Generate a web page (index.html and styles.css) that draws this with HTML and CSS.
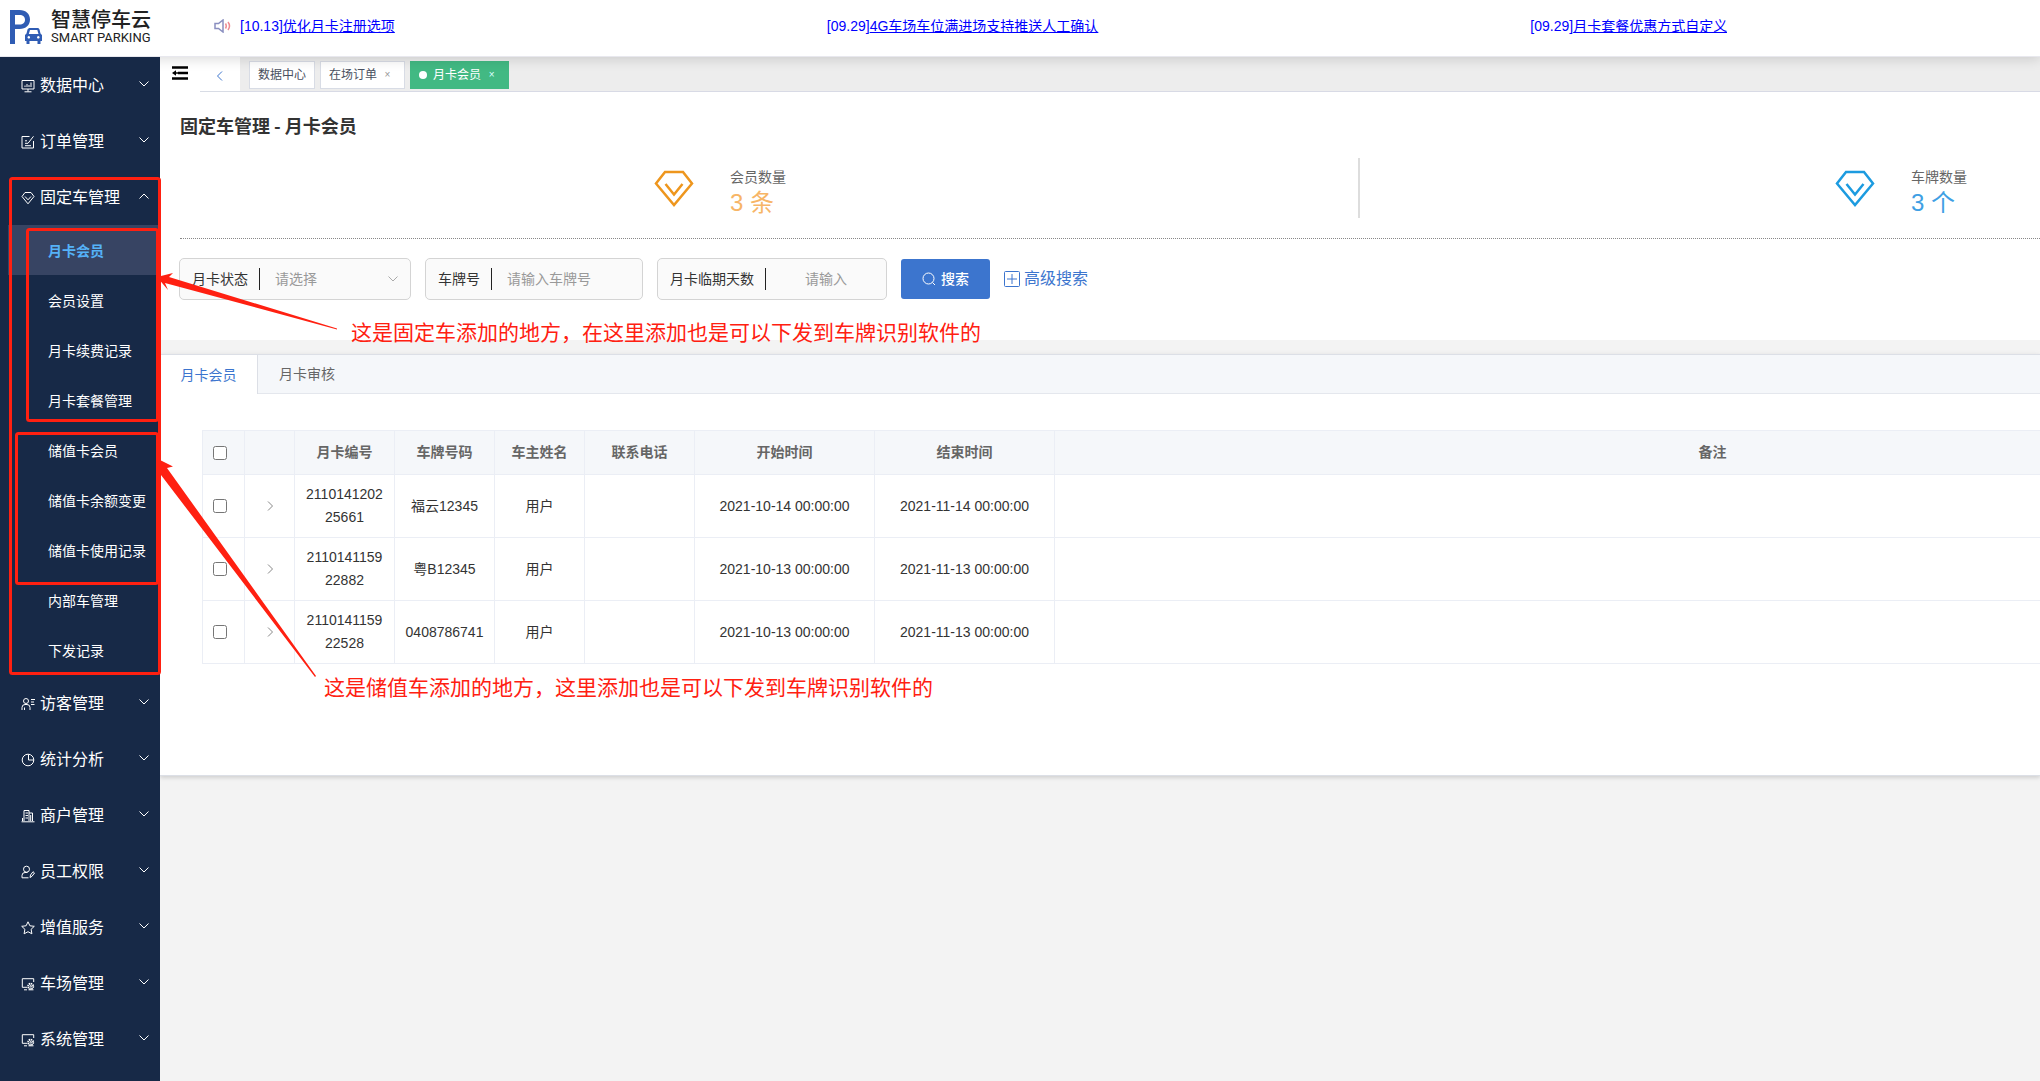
FILE: index.html
```html
<!DOCTYPE html>
<html lang="zh-CN">
<head>
<meta charset="utf-8">
<title>智慧停车云</title>
<link rel="stylesheet" href="styles.css">
</head>
<body>
<svg class="defs" aria-hidden="true">
  <symbol id="down" viewBox="0 0 12 12"><path d="M1.500 3.500L6 8l4.500-4.500"/></symbol>
  <symbol id="right" viewBox="0 0 12 12"><path d="M4 1.500L8.500 6 4 10.500"/></symbol>
  <symbol id="gem" viewBox="0 0 40 40"><path d="M11 3h18l9 11.500L20 36 2 14.500z"/><path d="M11.500 15L20 25.500 28.500 15"/></symbol>
  <symbol id="monitor-gear" viewBox="0 0 14 14"><path d="M6 10.300H1.300V1.700h11.400V5M3 12.800h3"/><circle cx="9.700" cy="9.300" r="2.600" stroke-dasharray="1.400 .6" stroke-width="1.800"/><circle cx="9.700" cy="9.300" r=".8"/><path d="M7.500 12.800h5"/></symbol>
</svg>

<header class="header">
  <div class="logo">
    <svg class="logo-mark" viewBox="0 0 32 34" aria-hidden="true">
      <path fill="#2f5cb4" fill-rule="evenodd" d="M0 0h9.500c6.500 0 10.500 4 10.500 9.500S16 19 9.500 19H5v15H0zM5 5v9.500h4.500c3.500 0 5.500-2 5.500-4.800S13 5 9.500 5z"/>
      <path fill="#2f5cb4" fill-rule="evenodd" d="M20 18h7.500c1 0 1.700.6 2 1.500l1 4 1.500 1.500v6h-1.500v3h-3v-3h-8v3h-3v-3H15v-6l1.500-1.500 1-4c.3-.9 1.500-1.500 2.500-1.500zm0 2-1.200 4h9.700l-1.200-4zM18.800 26a1.300 1.300 0 1 0 .01 0zm9.500 0a1.300 1.300 0 1 0 .01 0z"/>
    </svg>
    <div class="logo-text"><strong>智慧停车云</strong><span>SMART PARKING</span></div>
  </div>
  <div class="news">
    <svg class="speaker" viewBox="0 0 17 14" aria-hidden="true"><path d="M1 4.500h3.500L9 1v12L4.500 9.500H1z" stroke="#8a8fc0" stroke-width="1.500"/><path d="M11.500 4.500q1.500 2.500 0 5M14 3q3 4 0 8" stroke="#ee8a92" stroke-width="1.500"/></svg>
    <div class="news-list">
      <a href="#">[10.13]<u>优化月卡注册选项</u></a>
      <a href="#">[09.29]<u>4G车场车位满进场支持推送人工确认</u></a>
      <a href="#">[09.29]<u>月卡套餐优惠方式自定义</u></a>
    </div>
  </div>
</header>

<div class="layout">
  <nav class="sidebar">
    <a class="menu" href="#"><svg viewBox="0 0 14 14"><path d="M1 1.500h12v8.500H1zM3.500 12.800h7M7 10v2.500M4 8V6.500M6 8V5M8 8V6M10 8V3.500"/></svg><span>数据中心</span><svg class="arrow"><use href="#down"/></svg></a>
    <a class="menu" href="#"><svg viewBox="0 0 14 14"><path d="M8.500 1.500H1v11.500h11.500V6M4 10.700h6M4 8.300h3l5.500-7M4 5.800h2"/></svg><span>订单管理</span><svg class="arrow"><use href="#down"/></svg></a>
    <a class="menu" href="#"><svg viewBox="0 0 14 14"><path d="M4 1.500h6l3 4L7 12.800 1 5.500z"/><path d="M4 5.500l3 3.300 3-3.300"/></svg><span>固定车管理</span><svg class="arrow up"><use href="#down"/></svg></a>
    <div class="submenu">
      <a class="active" href="#">月卡会员</a>
      <a href="#">会员设置</a>
      <a href="#">月卡续费记录</a>
      <a href="#">月卡套餐管理</a>
      <a href="#">储值卡会员</a>
      <a href="#">储值卡余额变更</a>
      <a href="#">储值卡使用记录</a>
      <a href="#">内部车管理</a>
      <a href="#">下发记录</a>
    </div>
    <a class="menu" href="#"><svg viewBox="0 0 14 14"><circle cx="5" cy="4" r="2.500"/><path d="M1 13v-2.500q0-3 3-3h2q3 0 3 3V13M3.500 13v-2.500M10 2.500h4M10 5h3M10 7.500h3.500"/></svg><span>访客管理</span><svg class="arrow"><use href="#down"/></svg></a>
    <a class="menu" href="#"><svg viewBox="0 0 14 14"><circle cx="7" cy="7" r="5.800"/><path d="M7.500 1.500v5.500h5.500"/></svg><span>统计分析</span><svg class="arrow"><use href="#down"/></svg></a>
    <a class="menu" href="#"><svg viewBox="0 0 14 14"><path d="M3 12V1.500h5V12M8 4h3.500v8M.5 12.800h13M1.500 12V9M4.500 4H7M4.500 6.500H7M4.500 9H7M9.700 6v6"/></svg><span>商户管理</span><svg class="arrow"><use href="#down"/></svg></a>
    <a class="menu" href="#"><svg viewBox="0 0 14 14"><circle cx="5.500" cy="4.200" r="3"/><path d="M7.500 12.800H1v-2.300q0-3 3-3h2.500M9 12.500l.5-2.500 2.500-3.300 1.500 1.300-2.500 3.300z"/></svg><span>员工权限</span><svg class="arrow"><use href="#down"/></svg></a>
    <a class="menu" href="#"><svg viewBox="0 0 14 14"><path d="M7 .8l1.900 4 4.400.5-3.200 3 .8 4.500L7 10.700l-3.900 2.100.8-4.500-3.200-3 4.400-.5z"/></svg><span>增值服务</span><svg class="arrow"><use href="#down"/></svg></a>
    <a class="menu" href="#"><svg><use href="#monitor-gear"/></svg><span>车场管理</span><svg class="arrow"><use href="#down"/></svg></a>
    <a class="menu" href="#"><svg><use href="#monitor-gear"/></svg><span>系统管理</span><svg class="arrow"><use href="#down"/></svg></a>
  </nav>

  <main class="main">
    <div class="tagbar">
      <button class="fold" aria-label="收起菜单"><svg viewBox="0 0 16 14"><path d="M0 1.500h16M6 7h10M0 12.500h16" stroke-width="2.500"/><path d="M0 7l4-2.800v5.600z" fill="#000" stroke="none"/><path d="M3 7h3" stroke-width="1.500"/></svg></button>
      <button class="back" aria-label="后退"><svg><use href="#right"/></svg></button>
      <div class="tags">
        <a class="tag" href="#">数据中心</a>
        <a class="tag" href="#">在场订单<i>×</i></a>
        <a class="tag current" href="#"><b></b>月卡会员<i>×</i></a>
      </div>
    </div>

    <section class="top">
      <h1>固定车管理 - 月卡会员</h1>
      <div class="stats">
        <div class="stat members"><svg><use href="#gem"/></svg><div><p>会员数量</p><strong>3 条</strong></div></div>
        <div class="stat plates"><svg><use href="#gem"/></svg><div><p>车牌数量</p><strong>3 个</strong></div></div>
      </div>
      <form class="filters">
        <div class="field status">
          <label for="status">月卡状态</label>
          <select id="status"><option>请选择</option></select>
          <svg><use href="#down"/></svg>
        </div>
        <div class="field plate"><label for="plate">车牌号</label><input id="plate" type="text" placeholder="请输入车牌号"></div>
        <div class="field days"><label for="days">月卡临期天数</label><input id="days" type="text" placeholder="请输入"></div>
        <button class="search" type="button"><svg viewBox="0 0 14 14"><circle cx="6.500" cy="6.500" r="5.500"/><path d="M10.500 10.500l2.500 2.500"/></svg>搜索</button>
        <a class="advanced" href="#"><svg viewBox="0 0 16 16"><rect x=".5" y=".5" width="15" height="15" rx="1"/><path d="M3 8h10M8 3v10"/></svg>高级搜索</a>
      </form>
    </section>

    <section class="panel">
      <div class="tabs"><button class="on">月卡会员</button><button>月卡审核</button></div>
      <div class="table-wrap">
        <table>
          <colgroup><col class="c-check"><col class="c-open"><col class="c-id"><col class="c-id"><col class="c-name"><col class="c-phone"><col class="c-time"><col class="c-time"><col></colgroup>
          <thead>
            <tr><th><input type="checkbox" aria-label="全选"></th><th></th><th>月卡编号</th><th>车牌号码</th><th>车主姓名</th><th>联系电话</th><th>开始时间</th><th>结束时间</th><th>备注</th></tr>
          </thead>
          <tbody>
            <tr><td><input type="checkbox" aria-label="选择"></td><td><svg><use href="#right"/></svg></td><td>211014120225661</td><td>福云12345</td><td>用户</td><td></td><td>2021-10-14 00:00:00</td><td>2021-11-14 00:00:00</td><td></td></tr>
            <tr><td><input type="checkbox" aria-label="选择"></td><td><svg><use href="#right"/></svg></td><td>211014115922882</td><td>粤B12345</td><td>用户</td><td></td><td>2021-10-13 00:00:00</td><td>2021-11-13 00:00:00</td><td></td></tr>
            <tr><td><input type="checkbox" aria-label="选择"></td><td><svg><use href="#right"/></svg></td><td>211014115922528</td><td>0408786741</td><td>用户</td><td></td><td>2021-10-13 00:00:00</td><td>2021-11-13 00:00:00</td><td></td></tr>
          </tbody>
        </table>
      </div>
    </section>
  </main>
</div>

<svg class="marks" viewBox="0 0 360 700" aria-hidden="true">
  <g fill="none" stroke="#ff2011" stroke-width="3">
    <rect x="10.500" y="178.500" width="149" height="495" rx="2"/>
    <rect x="27.500" y="229.500" width="130" height="191" rx="2"/>
    <rect x="16.500" y="433.500" width="141" height="150" rx="2"/>
  </g>
  <path fill="#ff2011" d="M157 277L173 273l-4 4L337 328.500v1L165 283l3 7z"/>
  <path fill="#ff2011" d="M158 459L173 466.500l-6 1.500L316 676l-1 1L161 475l-3 6z"/>
</svg>
<p class="note note-monthly">这是固定车添加的地方，在这里添加也是可以下发到车牌识别软件的</p>
<p class="note note-stored">这是储值车添加的地方，这里添加也是可以下发到车牌识别软件的</p>
</body>
</html>
```
FILE: styles.css
```css
* { box-sizing: border-box; }
body {
  margin: 0;
  position: relative;
  min-height: 100vh;
  overflow-x: hidden;
  background: #f3f3f3;
  color: #333;
  font: 14px/20px "Liberation Sans", "Noto Sans CJK SC", sans-serif;
}
svg { fill: none; stroke: currentColor; display: block; flex: none; }
.defs { display: none; }
a { color: inherit; text-decoration: none; }
p, h1 { margin: 0; }
button, input, select { font: inherit; color: inherit; }
button { border: 0; padding: 0; background: none; }

/* header */
.header {
  position: relative;
  z-index: 1;
  display: flex;
  align-items: center;
  height: 57px;
  background: #fff;
  border-bottom: 1px solid #e8e8ee;
  box-shadow: 0 2px 12px rgba(0, 0, 0, .15);
}
.logo { display: flex; align-items: center; gap: 9px; width: 214px; padding: 0 0 2px 10px; flex: none; }
.logo-mark { width: 32px; height: 34px; stroke: none; }
.logo-text { display: flex; flex-direction: column; color: #222; }
.logo-text strong { font: 500 20px/22px "Noto Sans CJK SC", sans-serif; }
.logo-text span { font: 13px/16px Roboto, sans-serif; }
.news { display: flex; align-items: center; gap: 9px; padding-bottom: 4px; overflow: hidden; }
.speaker { width: 17px; height: 14px; }
.news-list { display: flex; gap: 432px; color: #00f; white-space: nowrap; }

/* sidebar */
.layout { display: flex; min-height: calc(100vh - 57px); }
.sidebar { position: relative; z-index: 2; flex: none; width: 160px; background: #172947; color: #fff; }
.menu { display: flex; align-items: center; height: 56px; padding: 2px 10px 0 21px; font-size: 16px; }
.menu svg { width: 14px; height: 14px; margin-right: 5px; }
.menu .arrow { width: 12px; height: 12px; margin: 0 0 4px auto; }
.menu .up { transform: rotate(180deg); }
.submenu a { display: flex; align-items: center; height: 50px; margin-left: 8px; padding: 2px 0 0 40px; }
.submenu .active { background: #374463; color: #55b2f8; font-weight: 700; }

/* open pages */
.main { flex: 1; min-width: 0; }
.tagbar { display: flex; height: 35px; background: #fff; }
.fold { width: 40px; padding-left: 12px; }
.fold svg { width: 16px; height: 14px; color: #000; margin-bottom: 4px; }
.back { width: 40px; padding: 4px 0 0 14px; color: #3c75ce; border-bottom: 1px solid #d8dce5; }
.back svg { width: 12px; height: 12px; transform: rotate(180deg); }
.tags { flex: 1; display: flex; gap: 5px; padding: 4px 9px 0; background: #ededed; border-bottom: 1px solid #d8dae5; }
.tag {
  display: flex;
  align-items: center;
  height: 28px;
  padding: 0 8px;
  border: 1px solid #d8dce5;
  background: #fff;
  color: #495060;
  font-size: 12px;
}
.tag i { width: 19px; padding-left: 2px; font-size: 10px; font-style: normal; text-align: center; color: #999; }
.tag b { width: 8px; height: 8px; margin-right: 6px; border-radius: 50%; background: #fff; }
.current { background: #42b983; border-color: #42b983; color: #fff; }
.current i { color: #dff; }

/* summary and search */
.top { padding: 20px 0 40px 20px; background: #fff; }
h1 { font: 700 18px/26px "Noto Sans CJK SC", sans-serif; }
.stats { display: grid; grid-template-columns: 1180fr 680fr; margin-top: 20px; padding-bottom: 20px; border-bottom: 1px dotted #888; }
.stat { display: flex; gap: 36px; height: 60px; padding-top: 10px; line-height: 18px; color: #666; }
.stat svg { width: 40px; height: 40px; margin-top: 1px; stroke-width: 2.5; }
.stat strong { display: block; font-size: 24px; line-height: 34px; font-weight: 400; }
.members { padding-left: 474px; border-right: 2px solid #ddd; }
.members svg { color: #ee961d; }
.members strong { color: #f7b566; }
.plates { justify-content: flex-end; padding-right: 73px; }
.plates svg { color: #1c9be0; }
.plates strong { color: #409fe4; }

.filters { display: flex; align-items: center; gap: 14px; margin: 19px 0 0 -1px; }
.field {
  display: flex;
  align-items: center;
  height: 42px;
  padding-left: 12px;
  border: 1px solid #d4d4d4;
  border-radius: 5px;
  background: #fafafa;
}
.field label { padding-right: 11px; border-right: 1px solid #222; line-height: 22px; white-space: nowrap; }
.field input, .field select {
  flex: 1;
  min-width: 0;
  height: 30px;
  padding: 0 0 0 15px;
  border: 0;
  background: none;
  color: #999;
  appearance: none;
}
.field input::placeholder { color: #999; }
.field svg { width: 12px; height: 12px; margin-right: 11px; color: #aaa; }
.status { width: 232px; }
.plate { width: 218px; }
.days { width: 230px; }
.days input { padding: 0; text-align: center; }
.search {
  display: flex;
  align-items: center;
  justify-content: center;
  gap: 5px;
  width: 89px;
  height: 40px;
  border-radius: 3px;
  background: #3c75ce;
  color: #fff;
  font-weight: 500;
}
.search svg { width: 14px; height: 14px; }
.advanced { display: flex; align-items: center; gap: 4px; color: #3c75ce; font-size: 16px; }
.advanced svg { width: 16px; height: 16px; }

/* member table */
.panel {
  margin-top: 14px;
  padding-bottom: 111px;
  background: #fff;
  border-top: 1px solid #dcdfe6;
  border-bottom: 1px solid #dcdfe6;
  box-shadow: 0 2px 4px rgba(0, 0, 0, .12), 0 0 6px rgba(0, 0, 0, .04);
}
.tabs { display: flex; height: 39px; background: #f5f7fa; border-bottom: 1px solid #e4e7ed; }
.tabs button { width: 98px; color: #666; }
.tabs .on { height: 39px; background: #fff; color: #3c75ce; border-right: 1px solid #dcdfe6; }
.table-wrap { margin: 36px 0 0 42px; overflow: hidden; }
table { width: 118%; table-layout: fixed; border-collapse: collapse; line-height: 23px; text-align: center; }
th, td { height: 63px; padding: 8px 10px; border: 1px solid #ebeef5; overflow-wrap: anywhere; }
th { height: 44px; background: #f5f7fa; color: #666; }
th:first-child, td:first-child { text-align: left; }
td svg { width: 12px; height: 12px; margin: auto; color: #888; }
th input, td input { display: block; width: 14px; height: 14px; margin: 0; }
.c-check { width: 42px; }
.c-open { width: 50px; }
.c-id { width: 100px; }
.c-name { width: 90px; }
.c-phone { width: 110px; }
.c-time { width: 180px; }

/* annotations drawn over the page */
.marks { position: absolute; z-index: 3; left: 0; top: 0; width: 360px; height: 700px; stroke: none; pointer-events: none; }
.note { position: absolute; z-index: 3; color: #ff2011; font-size: 21px; line-height: 30px; white-space: nowrap; }
.note-monthly { left: 351px; top: 318px; }
.note-stored { left: 324px; top: 673px; }
```
